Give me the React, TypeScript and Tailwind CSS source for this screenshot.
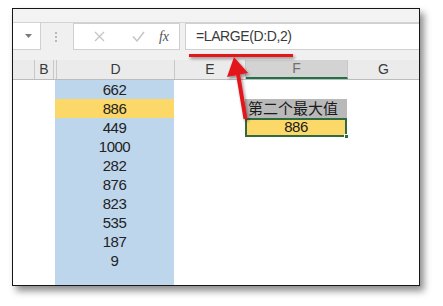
import React from "react";

const nums = ["662", "886", "449", "1000", "282", "876", "823", "535", "187", "9"];

export default function App() {
  return (
    <div className="relative w-[443px] h-[306px] bg-white overflow-hidden" style={{ fontFamily: '"Liberation Sans", Arial, sans-serif' }}>
      <div className="ml-[12px] mt-[8px] w-[408px] h-[278px] border border-[#161616] bg-white flex flex-col overflow-hidden shadow-[4px_5px_7px_rgba(0,0,0,0.45)]">
        {/* top strip */}
        <div className="h-[14px] shrink-0 bg-[#f3f3f3] border-b border-[#d3d3d3]" />
        {/* formula area */}
        <div className="shrink-0 bg-[#f0f0f0] flex flex-col">
          <div className="h-[27px] flex">
            <div className="w-[28px] bg-white border-r border-b border-[#d0d0d0] flex items-center justify-end pr-[8px]">
              <svg width="7" height="4" viewBox="0 0 7 4"><path d="M0 0 L7 0 L3.5 4 Z" fill="#7a7a7a" /></svg>
            </div>
            <div className="w-[32px] flex items-center justify-center pr-[3px]">
              <div className="flex flex-col gap-[2px]">
                <div className="w-[2px] h-[2px] bg-[#b8b8b8]" />
                <div className="w-[2px] h-[2px] bg-[#b8b8b8]" />
                <div className="w-[2px] h-[2px] bg-[#b8b8b8]" />
              </div>
            </div>
            <div className="w-[107px] bg-white border border-[#d0d0d0] flex items-center">
              <div className="w-[31px] flex justify-end">
                <svg width="11" height="11" viewBox="0 0 11 11"><path d="M1 1 L10 10 M10 1 L1 10" stroke="#c4c4c4" strokeWidth="1.3" /></svg>
              </div>
              <div className="w-[40px] flex justify-end">
                <svg width="13" height="11" viewBox="0 0 13 11"><path d="M1 5.5 L5 10 L12 1" stroke="#c4c4c4" strokeWidth="1.4" fill="none" /></svg>
              </div>
              <div className="flex-1 flex justify-end pr-[10px]">
                <span className="text-[14px] italic text-[#555]" style={{ fontFamily: '"Liberation Serif", serif' }}>fx</span>
              </div>
            </div>
            <div className="w-[5px]" />
            <div className="flex-1 bg-white border-y border-l border-[#d0d0d0] flex items-center pl-[10px]">
              <span className="text-[14px] tracking-[-0.4px] text-[#3a3a3a]">=LARGE(D:D,2)</span>
            </div>
          </div>
          <div className="h-[10px]" />
        </div>
        {/* header row */}
        <div className="h-[20px] shrink-0 bg-[#ebebeb] border-b border-[#bcbcbc] flex text-[14px] text-[#3a3a3a]">
          <div className="w-[22px] border-r border-[#c8c8c8]" />
          <div className="w-[19px] border-r border-[#c8c8c8] flex items-center justify-center">B</div>
          <div className="w-[3px] border-r border-[#c8c8c8]" />
          <div className="w-[118px] border-r border-[#c8c8c8] flex items-center justify-center">D</div>
          <div className="w-[71px] border-r border-[#c8c8c8] flex items-center justify-center">E</div>
          <div className="w-[102px] bg-[#d3d3d3] border-r border-[#c8c8c8] border-b-2 border-b-[#217346] flex items-center justify-center text-[#707070]">F</div>
          <div className="flex-1 flex items-center justify-center">G</div>
        </div>
        {/* body */}
        <div className="flex-1 flex text-[15px] tracking-[-0.5px] text-[#222]">
          <div className="w-[42px]" />
          <div className="w-[119px] bg-[#bed6ec] flex flex-col">
            {nums.map((n, i) => (
              <div key={i} className={`h-[19px] flex items-center justify-center pt-[1px] ${i === 1 ? "bg-[#fbd867]" : ""}`}>{n}</div>
            ))}
          </div>
          <div className="w-[71px]" />
          <div className="w-[102px] flex flex-col">
            <div className="h-[19px]" />
            <div className="h-[19px] bg-[#b9b9b9] flex items-center pl-[3px] text-[15px] tracking-normal text-[#1a1a1a]" style={{ fontFamily: '"Noto Sans CJK SC", sans-serif' }}>第二个最大值</div>
            <div className="relative h-[19px] bg-[#fbd867] border-2 border-[#2f6b3e] flex items-center justify-center text-[15px] text-[#1a1a1a]">
              886
              <div className="absolute right-[-4px] bottom-[-4px] w-[5px] h-[5px] bg-[#2f6b3e] border border-white" />
            </div>
          </div>
          <div className="flex-1" />
        </div>
      </div>
      {/* red annotation */}
      <svg className="absolute inset-0 pointer-events-none" width="443" height="306" viewBox="0 0 443 306">
        <defs>
          <filter id="sh" x="-20%" y="-20%" width="140%" height="140%">
            <feDropShadow dx="1.5" dy="2" stdDeviation="1.5" floodColor="#000" floodOpacity="0.4" />
          </filter>
        </defs>
        <g filter="url(#sh)">
          <line x1="189" y1="55.5" x2="293" y2="55.5" stroke="#e3191f" strokeWidth="3" />
          <line x1="245.5" y1="119" x2="238" y2="74" stroke="#e3191f" strokeWidth="4" />
          <path d="M234 57 L227 77 L248 73 Z" fill="#e3191f" />
        </g>
      </svg>
    </div>
  );
}
